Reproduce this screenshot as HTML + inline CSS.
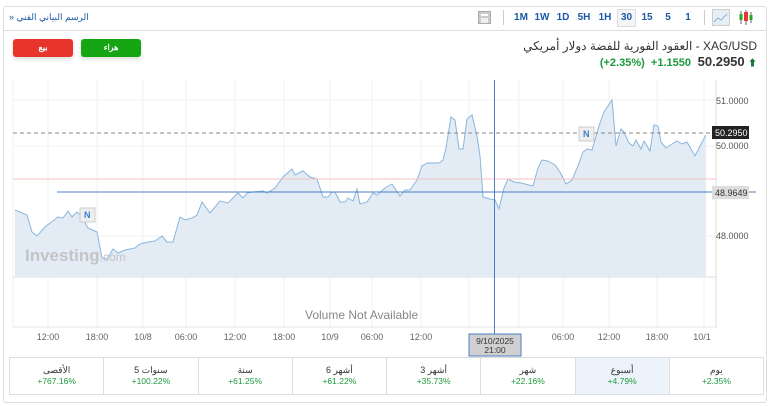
<!DOCTYPE html>
<html><head><meta charset="utf-8"><style>
*{margin:0;padding:0;box-sizing:border-box}
body{width:771px;height:406px;background:#fff;font-family:"Liberation Sans","Noto Sans CJK SC",sans-serif;position:relative;overflow:hidden}
.abs{position:absolute}
.box{left:3px;top:6px;width:764px;height:397px;border:1px solid #ddd;border-radius:3px}
.tf{top:11px;font-size:10px;font-weight:bold;color:#1a5aa5;width:20px;text-align:center;line-height:14px}
.btn{top:39px;height:18px;width:60px;border-radius:3px;color:#fff;font-size:8px;font-weight:bold;text-align:center;line-height:18px;box-shadow:0 2px 4px rgba(0,0,0,.15)}
.xl{top:332px;font-size:9px;color:#666;transform:translateX(-50%)}
.yl{left:716px;font-size:9px;color:#555}
table{position:absolute;left:9px;top:357px;width:755px;height:38px;border-collapse:collapse}
td{border:1px solid #ddd;text-align:center;font-size:9px;color:#333;line-height:11px;width:94px}
td span{display:block;color:#1a9a3a;font-size:8.5px}
</style></head><body>
<div class="abs box"></div>
<div class="abs" style="left:4px;top:30px;width:762px;height:1px;background:#ddd"></div>
<div class="abs" style="left:9px;top:12px;font-size:9px;color:#1a5aa5">» الرسم البياني الفني</div>
<div class="abs" style="left:478px;top:11px;width:13px;height:13px;background:#ccc;border:1px solid #aaa"><div style="margin:2px;height:2px;background:#fff"></div><div style="margin:1px 2px;height:5px;background:#eee"></div></div>
<div class="abs" style="left:503px;top:10px;width:1px;height:15px;background:#ccc"></div>
<div class="abs tf" style="left:511px">1M</div>
<div class="abs tf" style="left:532px">1W</div>
<div class="abs tf" style="left:553px">1D</div>
<div class="abs tf" style="left:574px">5H</div>
<div class="abs tf" style="left:595px">1H</div>
<div class="abs tf" style="left:617px;top:9px;height:18px;width:19px;border:1px solid #ddd;background:#f5f5f5;line-height:16px">30</div>
<div class="abs tf" style="left:637px">15</div>
<div class="abs tf" style="left:658px">5</div>
<div class="abs tf" style="left:678px">1</div>
<div class="abs" style="left:704px;top:10px;width:1px;height:15px;background:#ccc"></div>
<svg class="abs" style="left:712px;top:9px" width="18" height="17"><rect x=".5" y=".5" width="17" height="16" fill="#e8eef5" stroke="#ccc"/><path d="M2 13 L6 9 L9 11 L15 5" stroke="#8ab0dd" fill="none"/></svg>
<svg class="abs" style="left:739px;top:9px" width="14" height="17"><path d="M2 2v13M7 1v15M12 3v11" stroke="#666"/><rect x="0.5" y="5" width="3" height="6" fill="#2a2"/><rect x="5" y="3" width="4" height="9" fill="#e33"/><rect x="10.5" y="6" width="3" height="5" fill="#2a2"/></svg>
<div class="abs btn" style="left:13px;background:#e8352b">بيع</div>
<div class="abs btn" style="left:81px;background:#16a513">هراء</div>
<div class="abs" style="right:14px;top:39px;font-size:12px;color:#333;white-space:nowrap">العقود الفورية للفضة دولار أمريكي - XAG/USD</div>
<div class="abs" style="right:14px;top:54px;font-size:12px;white-space:nowrap;direction:ltr"><span style="color:#1a9a3a;font-size:11px;font-weight:bold">(+2.35%) &nbsp;+1.1550</span>&nbsp; <b style="color:#333;font-size:13px">50.2950</b> <span style="color:#1a7a3a;font-size:9px">⬆</span></div>
<svg class="abs" style="left:0;top:0" width="771" height="406">
<g stroke="#f0f0f0"><line x1="13" y1="100" x2="716" y2="100"/><line x1="13" y1="146" x2="716" y2="146"/><line x1="13" y1="236" x2="716" y2="236"/><line x1="13" y1="80" x2="13" y2="328"/>
<line x1="48" y1="80" x2="48" y2="328"/><line x1="97" y1="80" x2="97" y2="328"/><line x1="143" y1="80" x2="143" y2="328"/><line x1="186" y1="80" x2="186" y2="328"/><line x1="235" y1="80" x2="235" y2="328"/><line x1="284" y1="80" x2="284" y2="328"/><line x1="330" y1="80" x2="330" y2="328"/><line x1="372" y1="80" x2="372" y2="328"/><line x1="421" y1="80" x2="421" y2="328"/><line x1="469" y1="80" x2="469" y2="328"/><line x1="519" y1="80" x2="519" y2="328"/><line x1="563" y1="80" x2="563" y2="328"/><line x1="609" y1="80" x2="609" y2="328"/><line x1="657" y1="80" x2="657" y2="328"/><line x1="704" y1="80" x2="704" y2="328"/></g>
<line x1="716" y1="80" x2="716" y2="328" stroke="#ddd"/>
<line x1="13" y1="327" x2="716" y2="327" stroke="#e5e5e5"/>
<line x1="13" y1="277" x2="716" y2="277" stroke="#ddd"/>
<path d="M15 277 L15 210 L27 215 L32 232 L37 236 L45 227 L58 217 L63 218 L68 211 L72 217 L77 212 L82 217 L88 228 L97 232 L102 258 L107 259 L113 249 L118 253 L125 250 L135 248 L140 244 L148 242 L155 241 L162 236 L167 242 L173 242 L180 217 L185 220 L192 218 L197 215 L202 202 L210 213 L220 201 L228 203 L238 193 L243 198 L247 193 L253 192 L263 191 L267 193 L275 188 L283 177 L292 169 L295 175 L303 171 L310 177 L317 179 L323 197 L328 197 L332 192 L335 192 L340 202 L345 202 L348 198 L353 201 L357 189 L360 204 L367 202 L373 193 L377 195 L385 188 L392 184 L400 196 L405 190 L410 190 L417 180 L422 166 L427 163 L439 163 L443 160 L446 148 L451 117 L455 120 L459 149 L463 149 L467 119 L472 115 L477 136 L480 156 L483 197 L490 199 L495 200 L499 209 L504 188 L508 179 L514 182 L521 183 L533 186 L538 168 L542 160 L548 161 L555 165 L560 172 L566 184 L572 180 L578 166 L583 152 L587 149 L592 150 L599 126 L604 112 L612 100 L616 146 L621 129 L624 132 L629 143 L633 146 L636 140 L641 149 L644 141 L650 151 L654 125 L658 126 L661 142 L666 148 L672 144 L677 141 L682 144 L687 142 L695 156 L700 146 L706 135 L706 277 Z" fill="#e3ecf5" stroke="none"/>
<path d="M15 210 L27 215 L32 232 L37 236 L45 227 L58 217 L63 218 L68 211 L72 217 L77 212 L82 217 L88 228 L97 232 L102 258 L107 259 L113 249 L118 253 L125 250 L135 248 L140 244 L148 242 L155 241 L162 236 L167 242 L173 242 L180 217 L185 220 L192 218 L197 215 L202 202 L210 213 L220 201 L228 203 L238 193 L243 198 L247 193 L253 192 L263 191 L267 193 L275 188 L283 177 L292 169 L295 175 L303 171 L310 177 L317 179 L323 197 L328 197 L332 192 L335 192 L340 202 L345 202 L348 198 L353 201 L357 189 L360 204 L367 202 L373 193 L377 195 L385 188 L392 184 L400 196 L405 190 L410 190 L417 180 L422 166 L427 163 L439 163 L443 160 L446 148 L451 117 L455 120 L459 149 L463 149 L467 119 L472 115 L477 136 L480 156 L483 197 L490 199 L495 200 L499 209 L504 188 L508 179 L514 182 L521 183 L533 186 L538 168 L542 160 L548 161 L555 165 L560 172 L566 184 L572 180 L578 166 L583 152 L587 149 L592 150 L599 126 L604 112 L612 100 L616 146 L621 129 L624 132 L629 143 L633 146 L636 140 L641 149 L644 141 L650 151 L654 125 L658 126 L661 142 L666 148 L672 144 L677 141 L682 144 L687 142 L695 156 L700 146 L706 135" fill="none" stroke="#8ab5dd" stroke-width="1"/>
<line x1="13" y1="179" x2="716" y2="179" stroke="#f5c0c0"/>
<line x1="13" y1="133" x2="716" y2="133" stroke="#888" stroke-dasharray="4,3"/>
<line x1="57" y1="192" x2="756" y2="192" stroke="#4a7fc0"/>
<line x1="494.5" y1="80" x2="494.5" y2="336" stroke="#4a7fc0"/>
<text x="25" y="261" font-family="Liberation Sans" font-size="17" font-weight="bold" fill="#bbb" opacity=".8">Investing<tspan font-weight="normal" font-size="12">.com</tspan></text>
<text x="305" y="319" font-family="Liberation Sans" font-size="12" fill="#888">Volume Not Available</text>
<rect x="80" y="208" width="15" height="14" fill="#eee" stroke="#ccc"/><text x="84" y="218" font-family="Liberation Sans" font-size="9" font-weight="bold" fill="#3a7fd0">N</text>
<rect x="579" y="127" width="15" height="14" fill="#eee" stroke="#ccc"/><text x="583" y="137" font-family="Liberation Sans" font-size="9" font-weight="bold" fill="#3a7fd0">N</text>
<rect x="712" y="126" width="37" height="13" fill="#222"/><text x="715" y="136" font-family="Liberation Sans" font-size="9" fill="#fff">50.2950</text>
<rect x="712" y="186" width="37" height="13" fill="#ddd"/><text x="715" y="196" font-family="Liberation Sans" font-size="9" fill="#333">48.9649</text>
<rect x="469" y="334" width="52" height="22" fill="#d0d0d0" stroke="#4a7fc0"/><text x="495" y="344" text-anchor="middle" font-family="Liberation Sans" font-size="8.5" fill="#333">9/10/2025</text><text x="495" y="353" text-anchor="middle" font-family="Liberation Sans" font-size="8.5" fill="#333">21:00</text>
</svg>
<div class="abs yl" style="top:96px">51.0000</div>
<div class="abs yl" style="top:141px">50.0000</div>
<div class="abs yl" style="top:231px">48.0000</div>
<div class="abs xl" style="left:48px">12:00</div><div class="abs xl" style="left:97px">18:00</div><div class="abs xl" style="left:143px">10/8</div><div class="abs xl" style="left:186px">06:00</div><div class="abs xl" style="left:235px">12:00</div><div class="abs xl" style="left:284px">18:00</div><div class="abs xl" style="left:330px">10/9</div><div class="abs xl" style="left:372px">06:00</div><div class="abs xl" style="left:421px">12:00</div><div class="abs xl" style="left:563px">06:00</div><div class="abs xl" style="left:609px">12:00</div><div class="abs xl" style="left:657px">18:00</div><div class="abs xl" style="left:702px">10/1</div>
<table><tr>
<td>الأقصى<span>+767.16%</span></td><td>&lrm;5 سنوات<span>+100.22%</span></td><td>سنة<span>+61.25%</span></td><td>&lrm;6 أشهر<span>+61.22%</span></td><td>&lrm;3 أشهر<span>+35.73%</span></td><td>شهر<span>+22.16%</span></td><td style="background:#ecf3fa">أسبوع<span>+4.79%</span></td><td>يوم<span>+2.35%</span></td>
</tr></table>
</body></html>
